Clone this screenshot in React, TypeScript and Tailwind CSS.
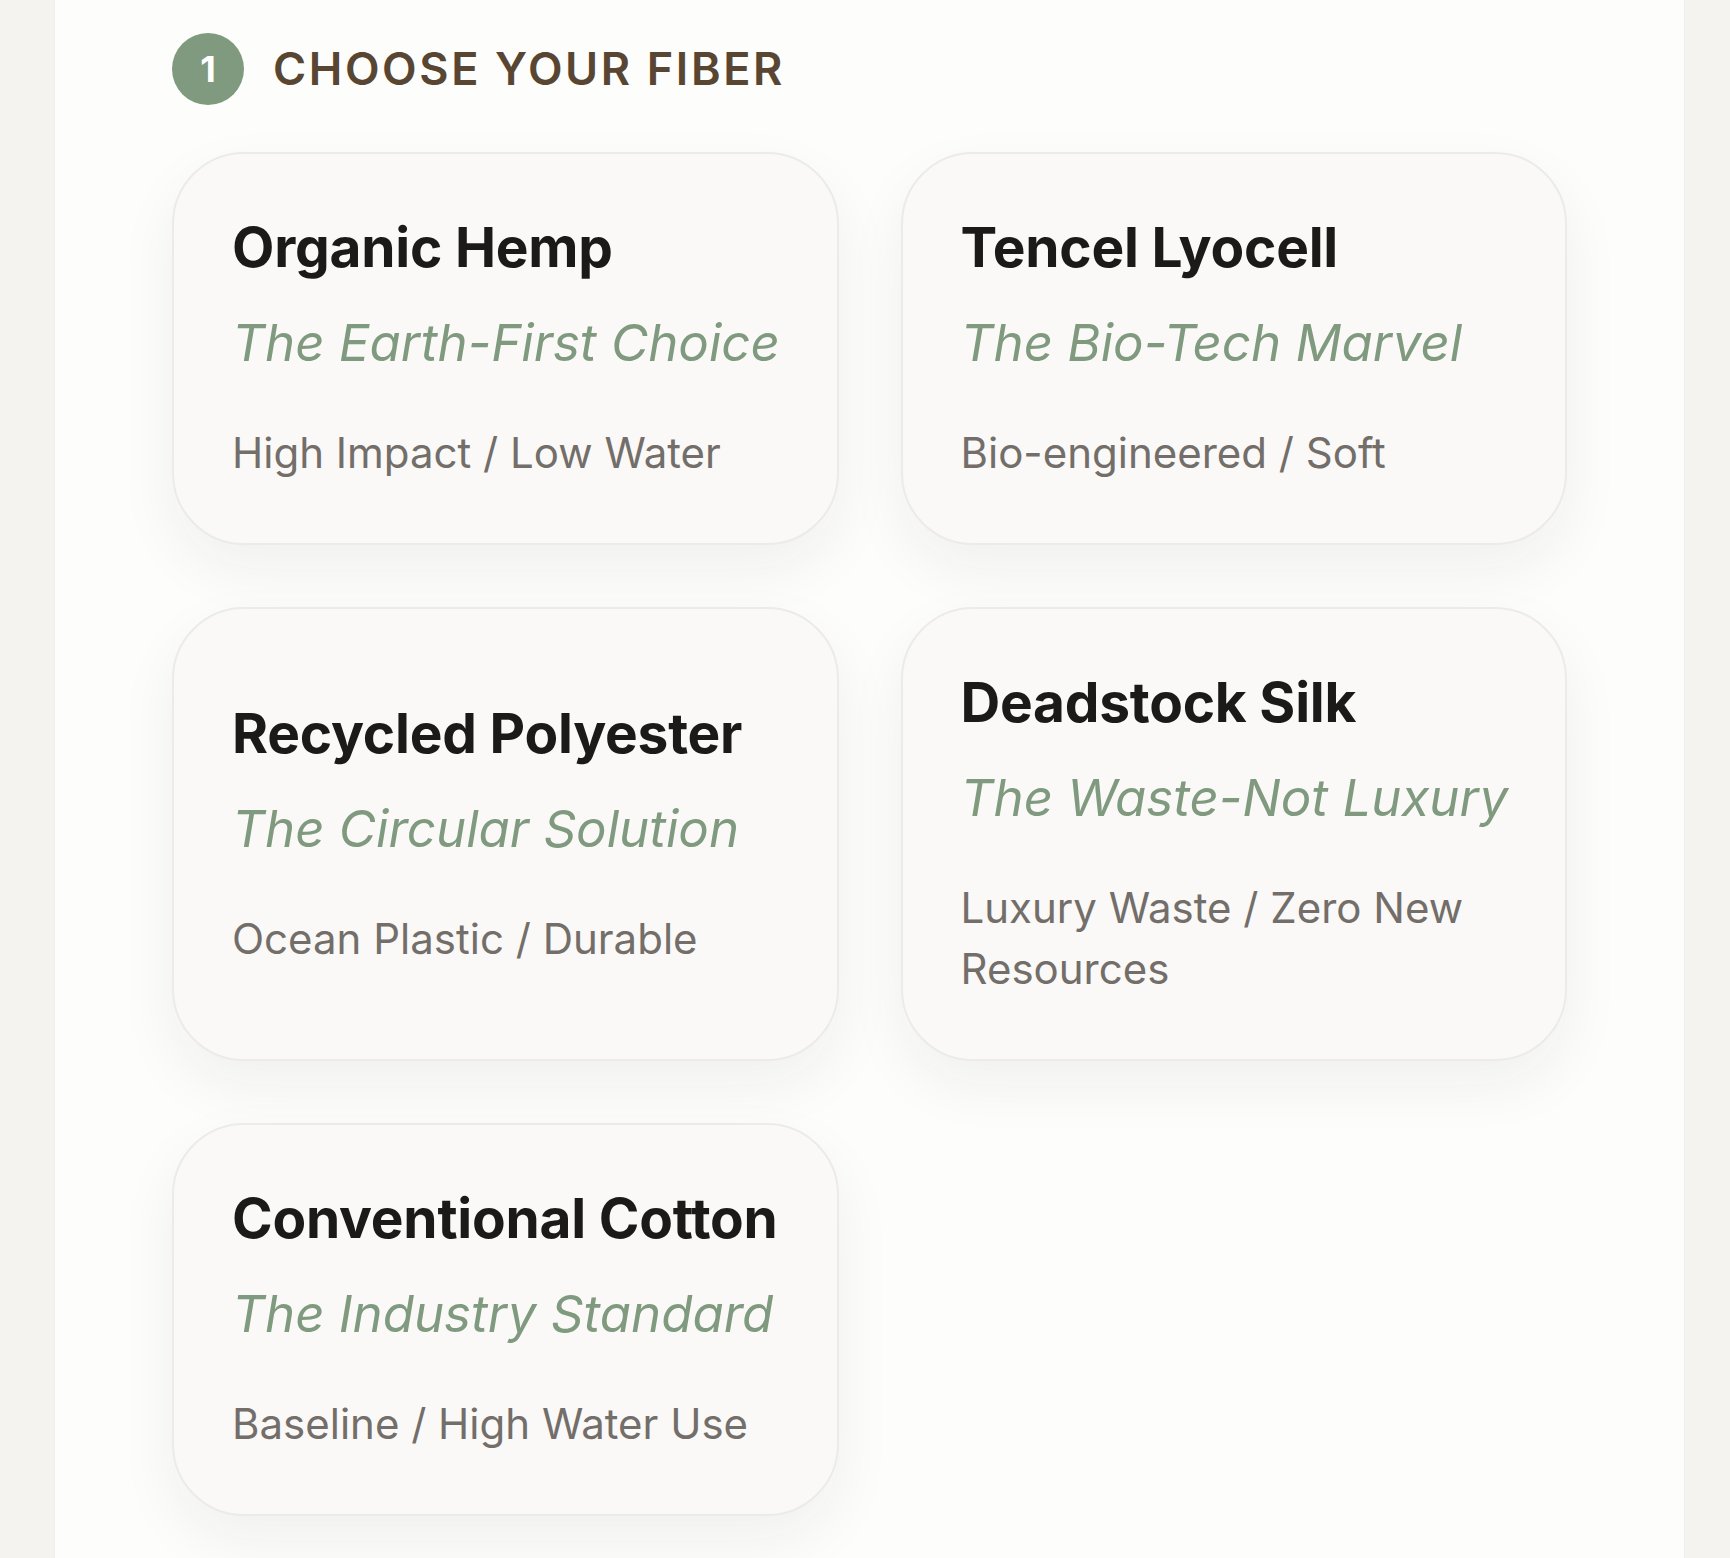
import React from 'react';

type Fiber = {
  name: string;
  tagline: string;
  traits: string;
};

const fibers: Fiber[] = [
  { name: 'Organic Hemp', tagline: 'The Earth-First Choice', traits: 'High Impact / Low Water' },
  { name: 'Tencel Lyocell', tagline: 'The Bio-Tech Marvel', traits: 'Bio-engineered / Soft' },
  { name: 'Recycled Polyester', tagline: 'The Circular Solution', traits: 'Ocean Plastic / Durable' },
  { name: 'Deadstock Silk', tagline: 'The Waste-Not Luxury', traits: 'Luxury Waste / Zero New Resources' },
  { name: 'Conventional Cotton', tagline: 'The Industry Standard', traits: 'Baseline / High Water Use' },
];

const FiberCard: React.FC<{ fiber: Fiber }> = ({ fiber }) => (
  <button
    type="button"
    className="flex flex-col justify-center text-left rounded-[72px] border-2 border-[#ecebe8] bg-[#faf9f7] pl-[58px] pr-[50px] py-[60px] shadow-[0_24px_60px_rgba(40,35,30,0.06)]"
  >
    <h3 className="text-[55px] leading-[67px] font-bold tracking-[-0.004em] text-[#1b1a18]">{fiber.name}</h3>
    <p className="mt-[24px] text-[51px] leading-[75px] italic text-[#7f9a7e]">{fiber.tagline}</p>
    <p className="mt-[42px] text-[42px] leading-[61px] text-[#736e69]">{fiber.traits}</p>
  </button>
);

export default function App() {
  return (
    <div className="min-h-screen bg-[#f5f3ef] pl-[54px] pr-[45px] font-['Inter',sans-serif]">
      <section className="min-h-screen border-x border-[#eeeff1] bg-[#fdfdfc] px-[117px] pt-[33px] pb-[60px]">
        {/* Step header */}
        <div className="flex items-center gap-[29px]">
          <span className="flex h-[72px] w-[72px] items-center justify-center rounded-full bg-[#7f9a7e] text-[36px] font-bold text-white">
            1
          </span>
          <h2 className="text-[45px] font-semibold uppercase tracking-[0.058em] text-[#584632]">Choose your fiber</h2>
        </div>

        {/* Fiber options */}
        <div className="mt-[47px] grid grid-cols-2 gap-[62px]">
          {fibers.map((f) => (
            <FiberCard key={f.name} fiber={f} />
          ))}
        </div>
      </section>
    </div>
  );
}
